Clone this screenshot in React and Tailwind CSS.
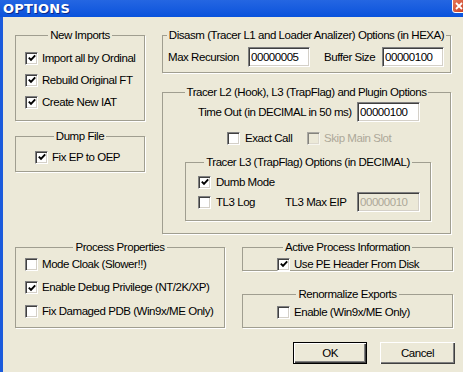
import React from "react";

function Check({ checked, disabled }) {
    return (
        <span
            className={`flex w-[13px] h-[13px] shrink-0 items-center justify-center border border-t-[#808080] border-l-[#808080] border-b-white border-r-white shadow-[inset_1px_1px_0_#404040,inset_-1px_-1px_0_#d4d0c8] ${
                disabled ? "bg-[#ece9d8] opacity-60" : "bg-white"
            }`}
        >
            {checked && (
                <svg width="8" height="8" viewBox="0 0 8 8">
                    <path d="M0.8 3.6 L3 5.9 L7.2 1.3" stroke="#000" strokeWidth="1.9" fill="none" />
                </svg>
            )}
        </span>
    );
}

function Group({ title, className, children }) {
    return (
        <fieldset className={`border border-[#a09e90] shadow-[1px_1px_0_#fff] ${className}`}>
            <legend align="center" className="mx-auto px-[2px] leading-[14px]">
                {title}
            </legend>
            {children}
        </fieldset>
    );
}

function Field({ value, disabled, className = "" }) {
    return (
        <div
            className={`h-[20px] flex items-center pl-[2px] border border-t-[#808080] border-l-[#808080] border-b-white border-r-white shadow-[inset_1px_1px_0_#404040,inset_-1px_-1px_0_#d4d0c8] ${
                disabled ? "bg-[#ece9d8] text-[#aca899]" : "bg-white"
            } ${className}`}
        >
            {value}
        </div>
    );
}

function CheckRow({ label, checked, disabled, className = "" }) {
    return (
        <div className={`flex items-center gap-[4px] h-[20px] ${className}`}>
            <Check checked={checked} disabled={disabled} />
            <span className={disabled ? "text-[#aca899]" : ""}>{label}</span>
        </div>
    );
}

function Button({ children, isDefault, className = "" }) {
    return (
        <button
            className={`h-[22px] flex items-center justify-center bg-[#ece9d8] ${
                isDefault
                    ? "border border-black shadow-[inset_1px_1px_0_#fff,inset_-1px_-1px_0_#404040,inset_-2px_-2px_0_#808080]"
                    : "shadow-[inset_1px_1px_0_#fff,inset_-1px_-1px_0_#404040,inset_-2px_-2px_0_#808080]"
            } ${className}`}
        >
            {children}
        </button>
    );
}

export default function App() {
    return (
        <div className="w-[463px] h-[372px] overflow-hidden whitespace-nowrap bg-[#ece9d8] text-black text-[11.5px] leading-[15px] tracking-[-0.45px] font-['Liberation_Sans',sans-serif]">
            {/* Title bar */}
            <div className="h-[17px] flex items-start justify-between overflow-hidden bg-gradient-to-b from-[#2466e2] to-[#0852dc]">
                <span className="pl-[3px] pt-[1px] text-white font-bold text-[13px] leading-[15px] tracking-[0.2px] font-['DejaVu_Sans',sans-serif] [text-shadow:1px_1px_0_#0a2a8a]">
                    OPTIONS
                </span>
                <span className="w-[16px] h-[16px] mt-[-3px] mr-[-5px] rounded-[3px] border border-white bg-gradient-to-br from-[#e87a5c] to-[#c6381c] flex items-end justify-start pl-[2px] pb-[2px]">
                    <svg width="8" height="8" viewBox="0 0 8 8">
                        <path d="M1 1 L7 7 M7 1 L1 7" stroke="#fff" strokeWidth="1.8" />
                    </svg>
                </span>
            </div>

            <div className="flex h-[355px]">
                <div className="w-[3px] bg-[#1b5bdc]" />
                <div className="flex-1 flex flex-col pl-[12px] pt-[11px]">
                    {/* Top section */}
                    <div className="flex gap-[17px]">
                        <div className="flex flex-col gap-[8px] w-[130px]">
                            <Group title="New Imports" className="h-[93px] pt-0">
                                <div className="flex flex-col pt-[5px] pl-[9px]">
                                    <CheckRow label="Import all by Ordinal" checked className="h-[22px]" />
                                    <CheckRow label="Rebuild Original FT" checked className="h-[22px]" />
                                    <CheckRow label="Create New IAT" checked className="h-[22px]" />
                                </div>
                            </Group>
                            <Group title="Dump File" className="h-[43px]">
                                <div className="pt-[4px] pl-[19px]">
                                    <CheckRow label="Fix EP to OEP" checked />
                                </div>
                            </Group>
                        </div>

                        <div className="flex flex-col gap-[12px] w-[289px]">
                            <Group title="Disasm (Tracer L1 and Loader Analizer) Options (in HEXA)" className="h-[45px]">
                                <div className="flex items-center pt-[5px] pl-[5px]">
                                    <span className="w-[80px]">Max Recursion</span>
                                    <Field value="00000005" className="w-[62px]" />
                                    <span className="w-[58px] ml-[14px]">Buffer Size</span>
                                    <Field value="00000100" className="w-[62px]" />
                                </div>
                            </Group>

                            <Group title="Tracer L2 (Hook), L3 (TrapFlag) and Plugin Options" className="h-[149px]">
                                <div className="flex flex-col pt-[3px]">
                                    <div className="flex items-center pl-[35px]">
                                        <span className="w-[159px]">Time Out (in DECIMAL in 50 ms)</span>
                                        <Field value="00000100" className="w-[63px]" />
                                    </div>
                                    <div className="flex items-center mt-[6px] pl-[64px]">
                                        <CheckRow label="Exact Call" className="w-[80px] gap-[5px]" />
                                        <CheckRow label="Skip Main Slot" disabled />
                                    </div>
                                    <Group title="Tracer L3 (TrapFlag) Options (in DECIMAL)" className="h-[66px] w-[246px] ml-[22px] mt-[7px]">
                                        <div className="flex flex-col pt-[3px] pl-[12px]">
                                            <CheckRow label="Dumb Mode" checked className="gap-[5px]" />
                                            <div className="flex items-center">
                                                <CheckRow label="TL3 Log" className="w-[87px] gap-[5px]" />
                                                <span className="w-[72px]">TL3 Max EIP</span>
                                                <Field value="00000010" disabled className="w-[63px]" />
                                            </div>
                                        </div>
                                    </Group>
                                </div>
                            </Group>
                        </div>
                    </div>

                    {/* Bottom section */}
                    <div className="flex gap-[17px] mt-[6px]">
                        <Group title="Process Properties" className="w-[210px] h-[88px]">
                            <div className="flex flex-col gap-[3.5px] pl-[9px]">
                                <CheckRow label="Mode Cloak (Slower!!)" />
                                <CheckRow label="Enable Debug Privilege (NT/2K/XP)" checked />
                                <CheckRow label="Fix Damaged PDB (Win9x/ME Only)" />
                            </div>
                        </Group>

                        <div className="flex flex-col w-[213px]">
                            <Group title="Active Process Information" className="w-[211px] h-[31px]">
                                <div className="pl-[34px]">
                                    <CheckRow label="Use PE Header From Disk" checked />
                                </div>
                            </Group>
                            <Group title="Renormalize Exports" className="w-[211px] h-[41px] mt-[16px]">
                                <div className="pl-[34px] pt-[1px]">
                                    <CheckRow label="Enable (Win9x/ME Only)" />
                                </div>
                            </Group>
                            <div className="flex gap-[13px] mt-[14px] ml-[51px]">
                                <Button isDefault className="w-[74px]">OK</Button>
                                <Button className="w-[75px]">Cancel</Button>
                            </div>
                        </div>
                    </div>
                </div>
            </div>
        </div>
    );
}
